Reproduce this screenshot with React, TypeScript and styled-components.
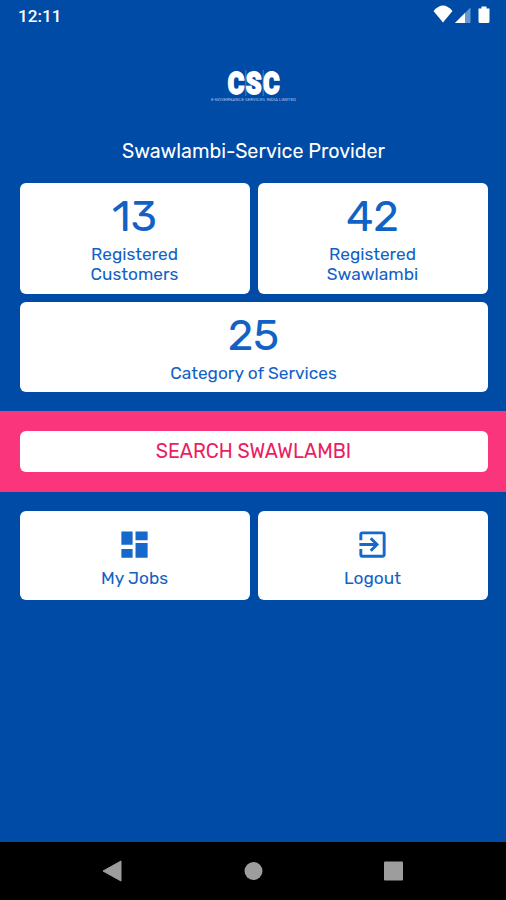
import React from "react";
import styled, { createGlobalStyle } from "styled-components";

const GlobalStyle = createGlobalStyle`
  * { box-sizing: border-box; }
  body { margin: 0; background: #004ba6; }
`;

const Screen = styled.div`
  width: 506px;
  height: 900px;
  display: flex;
  flex-direction: column;
  overflow: hidden;
  background: #004ba6;
  font-family: Rubik, Roboto, sans-serif;
  color: #fff;
`;

const StatusBar = styled.header`
  height: 32px;
  flex: none;
  display: flex;
  align-items: center;
  justify-content: space-between;
  padding: 0 16px 0 18px;
`;

const Clock = styled.time`
  font: 500 17.2px/32px Roboto, sans-serif;
`;

const Brand = styled.div`
  height: 72px;
  flex: none;
  display: flex;
  flex-direction: column;
  align-items: center;
  padding-top: 36px;
`;

const Wordmark = styled.svg`
  display: block;
  flex: none;
  overflow: visible;
`;

const Title = styled.h1`
  margin: 34px 0 0;
  height: 27px;
  flex: none;
  text-align: center;
  font-size: 19.7px;
  line-height: 28px;
  font-weight: 400;
  padding-left: 1px;
`;

const Cards = styled.section<{ $top: number }>`
  display: grid;
  grid-template-columns: 1fr 1fr;
  gap: 8px;
  flex: none;
  margin: ${(p) => p.$top}px 18.5px 0 19.5px;
`;

const Card = styled.div<{ $height: number; $wide?: boolean; $top?: number }>`
  grid-column: ${(p) => (p.$wide ? "1 / -1" : "auto")};
  height: ${(p) => p.$height}px;
  padding-top: ${(p) => p.$top ?? 7}px;
  display: flex;
  flex-direction: column;
  align-items: center;
  background: #fff;
  border-radius: 6px;
  color: #1262c6;
`;

const Count = styled.div`
  height: 54px;
  font-size: 43.5px;
  line-height: 53px;
`;

const Label = styled.div`
  font-size: 17.3px;
  line-height: 20.5px;
`;

const SearchBand = styled.section`
  flex: none;
  height: 81px;
  margin-top: 19px;
  padding: 20px 18.5px 20px 19.5px;
  background: #fb357b;
`;

const SearchButton = styled.button`
  display: block;
  width: 100%;
  height: 41px;
  padding: 0;
  border: 0;
  border-radius: 6px;
  background: #fff;
  color: #e91e63;
  font: 400 19.6px/41px Rubik, Roboto, sans-serif;
`;

const CardIcon = styled.svg`
  display: block;
  width: 35px;
  height: 35px;
  margin-bottom: 6px;
`;

const NavBar = styled.nav`
  margin-top: auto;
  height: 58px;
  flex: none;
  display: flex;
  justify-content: space-between;
  align-items: center;
  padding: 0 102px;
  background: #000;
`;

const StatusIcons = () => (
  <svg width="58" height="32" viewBox="0 0 58 32">
    <path d="M1.5 10.5Q11-.5 20.5 10.5L11 22Z" fill="#fff" transform="translate(0 .5)" />
    <path d="M38.5 7.5V23H23Z" fill="#6299d3" />
    <path d="M33 13V23H23Z" fill="#fff" />
    <path d="M46.5 8.5h3v-2h5v2h3v13q0 1.5-1.5 1.5h-8q-1.5 0-1.5-1.5z" fill="#fff" />
  </svg>
);

const Logo = () => (
  <Wordmark width="90" height="36" viewBox="0 0 90 36">
    <text
      x="0"
      y="26"
      transform="translate(19.8 0) scale(.8 1)"
      fontFamily="Roboto, sans-serif"
      fontWeight="900"
      fontSize="31.5"
      letterSpacing="1.8"
      fill="#fff"
      stroke="#fff"
      strokeWidth="1.8"
    >
      CSC
    </text>
    <path d="M37.8 2V28M55.2 2V28" stroke="#7fa8dc" strokeWidth=".6" />
    <text
      x="3"
      y="33"
      fontFamily="Roboto, sans-serif"
      fontSize="4"
      textLength="85"
      lengthAdjust="spacingAndGlyphs"
      fill="#a9c6ef"
    >
      E-GOVERNANCE SERVICES INDIA LIMITED
    </text>
  </Wordmark>
);

export default function App() {
  return (
    <>
      <GlobalStyle />
      <Screen>
        <StatusBar>
          <Clock>12:11</Clock>
          <StatusIcons />
        </StatusBar>
        <Brand>
          <Logo />
        </Brand>
        <Title>Swawlambi-Service Provider</Title>
        <Cards $top={17.5}>
          <Card $height={111}>
            <Count>13</Count>
            <Label>Registered</Label>
            <Label>Customers</Label>
          </Card>
          <Card $height={111}>
            <Count>42</Count>
            <Label>Registered</Label>
            <Label>Swawlambi</Label>
          </Card>
          <Card $height={90.5} $wide>
            <Count>25</Count>
            <Label>Category of Services</Label>
          </Card>
        </Cards>
        <SearchBand>
          <SearchButton>SEARCH SWAWLAMBI</SearchButton>
        </SearchBand>
        <Cards $top={19}>
          <Card $height={89} $top={16}>
            <CardIcon viewBox="0 0 24 24" fill="#1768cb">
              <path d="M3 12.2h7.7V3H3v9.2zm0 8.8h7.7v-6H3V21zm9.7 0H21V11h-8.3V21zm0-18v6H21V3h-8.3z" />
            </CardIcon>
            <Label>My Jobs</Label>
          </Card>
          <Card $height={89} $top={16}>
            <CardIcon viewBox="0 0 24 24" fill="#1768cb">
              <path d="M10.09 15.59 11.5 17l5-5-5-5-1.41 1.41L12.67 11H3v2h9.67l-2.58 2.59zM19 3H5a2 2 0 0 0-2 2v4h2V5h14v14H5v-4H3v4a2 2 0 0 0 2 2h14c1.1 0 2-.9 2-2V5a2 2 0 0 0-2-2z" />
            </CardIcon>
            <Label>Logout</Label>
          </Card>
        </Cards>
        <NavBar>
          <svg width="20" height="22" viewBox="0 0 20 22">
            <path d="M1 11 19 1V21Z" fill="#9d9d9d" stroke="#9d9d9d" strokeLinejoin="round" />
          </svg>
          <svg width="20" height="20" viewBox="0 0 20 20">
            <circle cx="10.5" cy="10" r="9" fill="#9d9d9d" />
          </svg>
          <svg width="20" height="20" viewBox="0 0 20 20">
            <rect x="0" y=".5" width="19" height="19" rx="1" fill="#9d9d9d" />
          </svg>
        </NavBar>
      </Screen>
    </>
  );
}
